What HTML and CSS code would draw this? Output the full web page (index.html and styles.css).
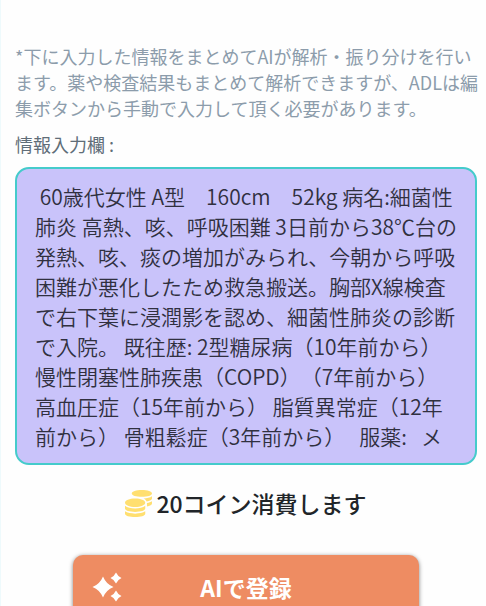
FILE: index.html
```html
<!DOCTYPE html>
<html lang="ja">
<head>
    <meta charset="UTF-8">
    <meta name="viewport" content="width=device-width, initial-scale=1.0">
    <title>AIで登録</title>
    <link rel="stylesheet" href="styles.css">
</head>
<body>

    <form class="container">
        <p class="note">*下に入力した情報をまとめてAIが解析・振り分けを行います。薬や検査結果もまとめて解析できますが、ADLは編集ボタンから手動で入力して頂く必要があります。</p>

        <label class="input-label" for="patient-info">情報入力欄 :</label>
        <textarea class="info-box" id="patient-info" rows="9" spellcheck="false"> 60歳代女性 A型　160cm　52kg 病名:細菌性
肺炎 高熱、咳、呼吸困難 3日前から38℃台の
発熱、咳、痰の増加がみられ、今朝から呼吸
困難が悪化したため救急搬送。胸部X線検査
で右下葉に浸潤影を認め、細菌性肺炎の診断
で入院。 既往歴: 2型糖尿病（10年前から）
慢性閉塞性肺疾患（COPD）（7年前から）
高血圧症（15年前から） 脂質異常症（12年
前から） 骨粗鬆症（3年前から）   服薬:   メ</textarea>

        <!-- Coin cost -->
        <p class="cost">
            <svg class="coin-icon" viewBox="0 0 512 512" aria-hidden="true">
                <path d="M0 405.3V448c0 35.300 86 64 192 64s192-28.700 192-64v-42.700C342.700 434.400 267.200 448 192 448S41.300 434.400 0 405.300zM320 128c106 0 192-28.700 192-64S426 0 320 0 128 28.700 128 64s86 64 192 64zM0 300.400V352c0 35.300 86 64 192 64s192-28.700 192-64v-51.600c-41.300 34-116.900 51.600-192 51.600S41.300 334.400 0 300.400zm416 11c57.300-11.100 96-31.700 96-55.400v-42.700c-23.200 16.400-57.300 27.600-96 34.500v63.600zM192 160C86 160 0 195.800 0 240s86 80 192 80 192-35.800 192-80-86-80-192-80zm219.300 56.300c60-10.800 100.700-32 100.700-56.300v-42.700c-35.500 25.100-96.500 38.600-160.700 41.800 29.500 14.300 51.200 33.500 60 57.200z"/>
            </svg>
            <span>20コイン消費します</span>
        </p>

        <button class="register" type="button">
            <svg class="spark-icon" viewBox="0 0 30 30" aria-hidden="true">
                <path d="M11 4.500Q14 12 21.500 15Q14 18 11 25.500Q8 18 .5 15Q8 12 11 4.500Z"/>
                <path d="M24 .5Q25.700 4.300 29.500 6Q25.700 7.700 24 11.500Q22.300 7.700 18.500 6Q22.300 4.300 24 .5Z"/>
                <path d="M24 18.500Q25.700 22.300 29.500 24Q25.700 25.700 24 29.500Q22.300 25.700 18.500 24Q22.300 22.300 24 18.500Z"/>
            </svg>
            AIで登録
        </button>
    </form>

</body>
</html>
```
FILE: styles.css
```css
/* Reset */
* {
    margin: 0;
    padding: 0;
    box-sizing: border-box;
}

body {
    font-family: "Noto Sans CJK JP", sans-serif;
    background-color: #fefefe;
    border-left: 1px solid #eefafc;
    color: #212529;
}

.container {
    display: flex;
    flex-direction: column;
    padding: 43px 9px 0 14px;
}

.note {
    margin-right: -4px;
    font-size: 18px;
    line-height: 26px;
    color: #8c9cab;
}

/* Patient information box */
.input-label {
    margin: 10px 0;
    font-size: 18px;
    line-height: 26px;
    color: #606d78;
}

.info-box {
    display: block;
    width: 100%;
    padding: 12px 0 12px 18px;
    border: 2px solid #45cbcb;
    border-radius: 14px;
    background-color: #c9c3fa;
    color: #30303f;
    font-family: "Noto Sans CJK JP DemiLight", "Noto Sans CJK JP", sans-serif;
    font-size: 21px;
    font-weight: 350;
    line-height: 30px;
    text-spacing-trim: space-all;
    resize: none;
    overflow: hidden;
}

/* Coin cost */
.cost {
    display: flex;
    justify-content: center;
    align-items: center;
    gap: 4px;
    margin-top: 21px;
    font-size: 23px;
    font-weight: 500;
    line-height: 34px;
}

.coin-icon {
    width: 27px;
    height: 27px;
    fill: #ffdf70;
}

/* Register button */
.register {
    display: grid;
    grid-template-columns: 30px 1fr 30px;
    align-items: center;
    align-self: center;
    width: 75%;
    margin-top: 35px;
    padding: 14px 19px;
    border: none;
    border-radius: 10px;
    background-color: #ee8c62;
    box-shadow: 0 1px 4px rgba(0, 0, 0, 0.5);
    color: #fff;
    font-family: inherit;
    font-size: 23px;
    font-weight: 700;
    line-height: 36px;
    cursor: pointer;
}

.spark-icon {
    width: 30px;
    height: 30px;
    fill: #fff;
}
```
